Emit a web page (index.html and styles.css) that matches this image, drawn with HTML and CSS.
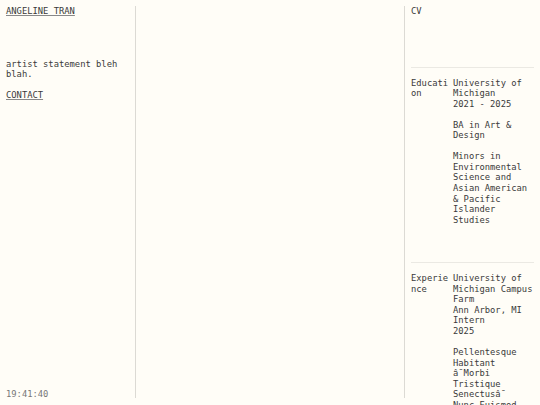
FILE: index.html
```html
<!DOCTYPE html>
<html lang="en">
<head>
<meta charset="utf-8">
<title>Angeline Tran</title>
<link rel="stylesheet" href="styles.css">
</head>
<body>
<main class="page">
  <aside class="col col-left">
    <a class="link" href="#">ANGELINE TRAN</a>
    <p class="statement">artist statement bleh blah.</p>
    <a class="link" href="#">CONTACT</a>
    <div class="clock">19:41:40</div>
  </aside>
  <section class="col col-mid"></section>
  <aside class="col col-right">
    <div class="cv-title">CV</div>
    <div class="cv-section">
      <div class="cv-label">Education</div>
      <div class="cv-body">
        <p>University of Michigan<br>2021 - 2025</p>
        <p>BA in Art &amp; Design</p>
        <p class="last">Minors in Environmental Science and Asian American &amp; Pacific Islander Studies</p>
      </div>
    </div>
    <div class="cv-section">
      <div class="cv-label">Experience</div>
      <div class="cv-body">
        <p>University of Michigan Campus Farm<br>Ann Arbor, MI<br>Intern<br>2025</p>
        <p>Pellentesque Habitant â¯Morbi Tristique Senectusâ¯<br>Nunc Euismod Lorem</p>
      </div>
    </div>
  </aside>
</main>
</body>
</html>
```
FILE: styles.css
```css
html {
  overflow: hidden;
}
body {
  margin: 0;
  background: #fffdf7;
  color: #3a3a3a;
  font-family: "DejaVu Sans Mono", "Liberation Mono", monospace;
  font-size: 8.8px;
  line-height: 1.2;
}
.page {
  display: grid;
  grid-template-columns: 136px 1fr 136px;
  height: calc(100vh - 13px);
  margin: 6px 0 7px;
}
.col {
  min-height: 0;
}
.col-left {
  display: flex;
  flex-direction: column;
  align-items: flex-start;
  padding: 0 6px;
  border-right: 1px solid #dcdad4;
}
.link {
  color: #3a3a3a;
  text-decoration: underline;
  text-decoration-color: #888;
}
.statement {
  margin: 42px 0 10.56px;
}
.clock {
  margin-top: auto;
  margin-bottom: -2px;
  color: #777;
}
.col-right {
  padding: 0 6px;
  border-left: 1px solid #dcdad4;
}
.cv-title {
  margin-bottom: 50px;
}
.cv-section {
  display: grid;
  grid-template-columns: 42px 1fr;
  border-top: 1px solid #ebe9e3;
  padding: 10px 0 37px;
}
.cv-label {
  overflow-wrap: anywhere;
  word-break: break-all;
}
.cv-body p {
  margin: 0 0 10.56px;
}
.cv-body p.last {
  margin-bottom: 0;
}
```
